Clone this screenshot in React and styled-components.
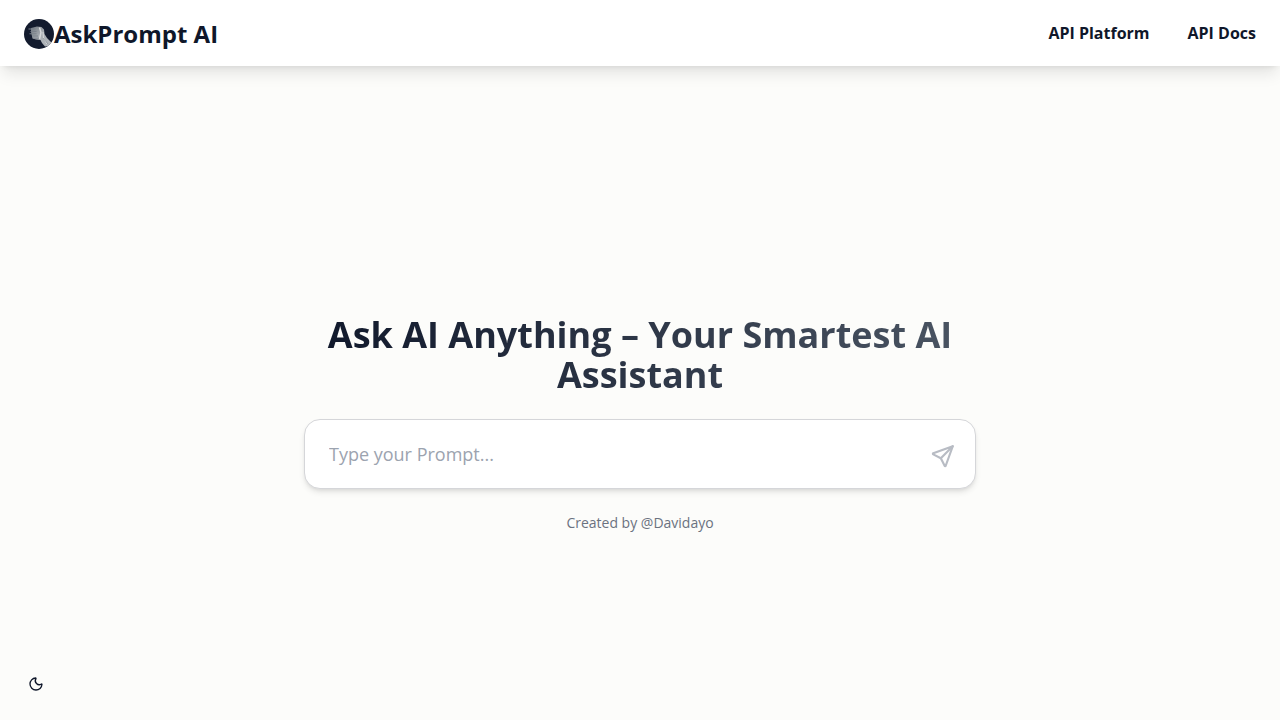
import React from 'react'
import styled, { createGlobalStyle } from 'styled-components'
import { Moon } from 'lucide-react'
import { TbSend } from 'react-icons/tb'

const GlobalStyle = createGlobalStyle`
  *, *::before, *::after {
    box-sizing: border-box;
  }

  body {
    margin: 0;
    background-color: #fcfcfa;
    color: #0f172a;
    font-family: 'Open Sans', 'Noto Sans', sans-serif;
  }
`

const Page = styled.div`
  display: flex;
  flex-direction: column;
  min-height: 100vh;
`

const Header = styled.header`
  display: flex;
  align-items: center;
  justify-content: space-between;
  padding: 16px 24px;
  background-color: #fff;
  box-shadow: 0 10px 15px -3px rgba(0, 0, 0, 0.1), 0 4px 6px -4px rgba(0, 0, 0, 0.1);
`

const Brand = styled.a`
  display: flex;
  align-items: center;
  padding-top: 2px;
  color: inherit;
  font-size: 24px;
  font-weight: 700;
  line-height: 32px;
  text-decoration: none;
`

const Nav = styled.nav`
  display: flex;
  gap: 38px;
`

const NavLink = styled.a`
  color: inherit;
  font-size: 16px;
  font-weight: 700;
  line-height: 24px;
  text-decoration: none;

  &:hover {
    text-decoration: underline;
  }
`

const Main = styled.main`
  flex: 1;
  display: flex;
  flex-direction: column;
  align-items: center;
  justify-content: center;
  gap: 24px;
  padding: 62px 24px 0;
`

const Title = styled.h1`
  width: 100%;
  max-width: 672px;
  margin: 0;
  background-image: linear-gradient(to right, #0f172a, #4b5563);
  background-clip: text;
  color: transparent;
  font-size: 36px;
  font-weight: 700;
  line-height: 40px;
  text-align: center;
`

const PromptForm = styled.form`
  display: flex;
  align-items: center;
  width: 100%;
  max-width: 672px;
  height: 70px;
  padding: 0 19px 0 24px;
  border: 1px solid #d5d6d9;
  border-radius: 16px;
  background-color: #fff;
  box-shadow: 0 4px 6px -1px rgba(0, 0, 0, 0.1), 0 2px 4px -2px rgba(0, 0, 0, 0.1);
`

const PromptInput = styled.input`
  flex: 1;
  min-width: 0;
  padding: 0;
  border: 0;
  outline: 0;
  background: transparent;
  color: inherit;
  font-family: inherit;
  font-size: 18px;
  line-height: 28px;

  &::placeholder {
    color: #9ca3af;
    opacity: 1;
  }
`

const IconButton = styled.button`
  display: flex;
  padding: 0;
  border: 0;
  background: transparent;
  color: ${props => props.$color || 'inherit'};
  cursor: pointer;
`

const SendButton = styled(IconButton)`
  padding-top: 4px;
`

const Credit = styled.p`
  margin: 0;
  color: #6b7280;
  font-size: 14px;
  line-height: 20px;
`

const ThemeCorner = styled.div`
  position: fixed;
  bottom: 28px;
  left: 28px;
`

const Logo = () => (
  <svg width="30" height="30" viewBox="0 0 30 30" aria-hidden="true">
    <defs>
      <linearGradient id="face" x1="0" x2="1" y1="0" y2="1">
        <stop offset="0" stopColor="#6f767f" />
        <stop offset="0.45" stopColor="#a9aeb3" />
        <stop offset="1" stopColor="#b4b8bd" />
      </linearGradient>
      <clipPath id="disc">
        <circle cx="15" cy="15" r="15" />
      </clipPath>
    </defs>
    <g clipPath="url(#disc)">
      <rect width="30" height="30" fill="#131b2e" />
      <path d="M7 9L13 7.500 17.500 8 20 10.500 20.500 15 23 19 28 24 25.500 27 21 27.500 18 24 16.500 21 12 20.500 8.500 19.500 7 13z" fill="url(#face)" />
      <path d="M4.500 10h7M6.500 12.500h6M5.500 14.800h7M8 17h6M9 19.200h7" stroke="#7b828b" strokeWidth="1" />
      <path d="M15.500 8.500l1.500 5-1.500 6.500" fill="none" stroke="#d7d9db" strokeWidth="1.500" />
      <path d="M19 13l.5 6 3.500 6" fill="none" stroke="#d7d9db" strokeWidth="1" />
      <path d="M19 19l5 6" fill="none" stroke="#8d939a" strokeWidth="0.800" />
    </g>
  </svg>
)

export default function App() {
  return (
    <Page>
      <GlobalStyle />
      <Header>
        <Brand href="#">
          <Logo />
          AskPrompt AI
        </Brand>
        <Nav>
          <NavLink href="#platform">API Platform</NavLink>
          <NavLink href="#docs">API Docs</NavLink>
        </Nav>
      </Header>

      <Main>
        <Title>Ask AI Anything – Your Smartest AI Assistant</Title>
        <PromptForm onSubmit={e => e.preventDefault()}>
          <PromptInput type="text" aria-label="Prompt" placeholder="Type your Prompt..." />
          <SendButton type="submit" aria-label="Send" $color="#b8bcc4">
            <TbSend size={26} />
          </SendButton>
        </PromptForm>
        <Credit>Created by @Davidayo</Credit>
      </Main>

      <ThemeCorner>
        <IconButton type="button" aria-label="Toggle dark mode">
          <Moon size={16} />
        </IconButton>
      </ThemeCorner>
    </Page>
  )
}
